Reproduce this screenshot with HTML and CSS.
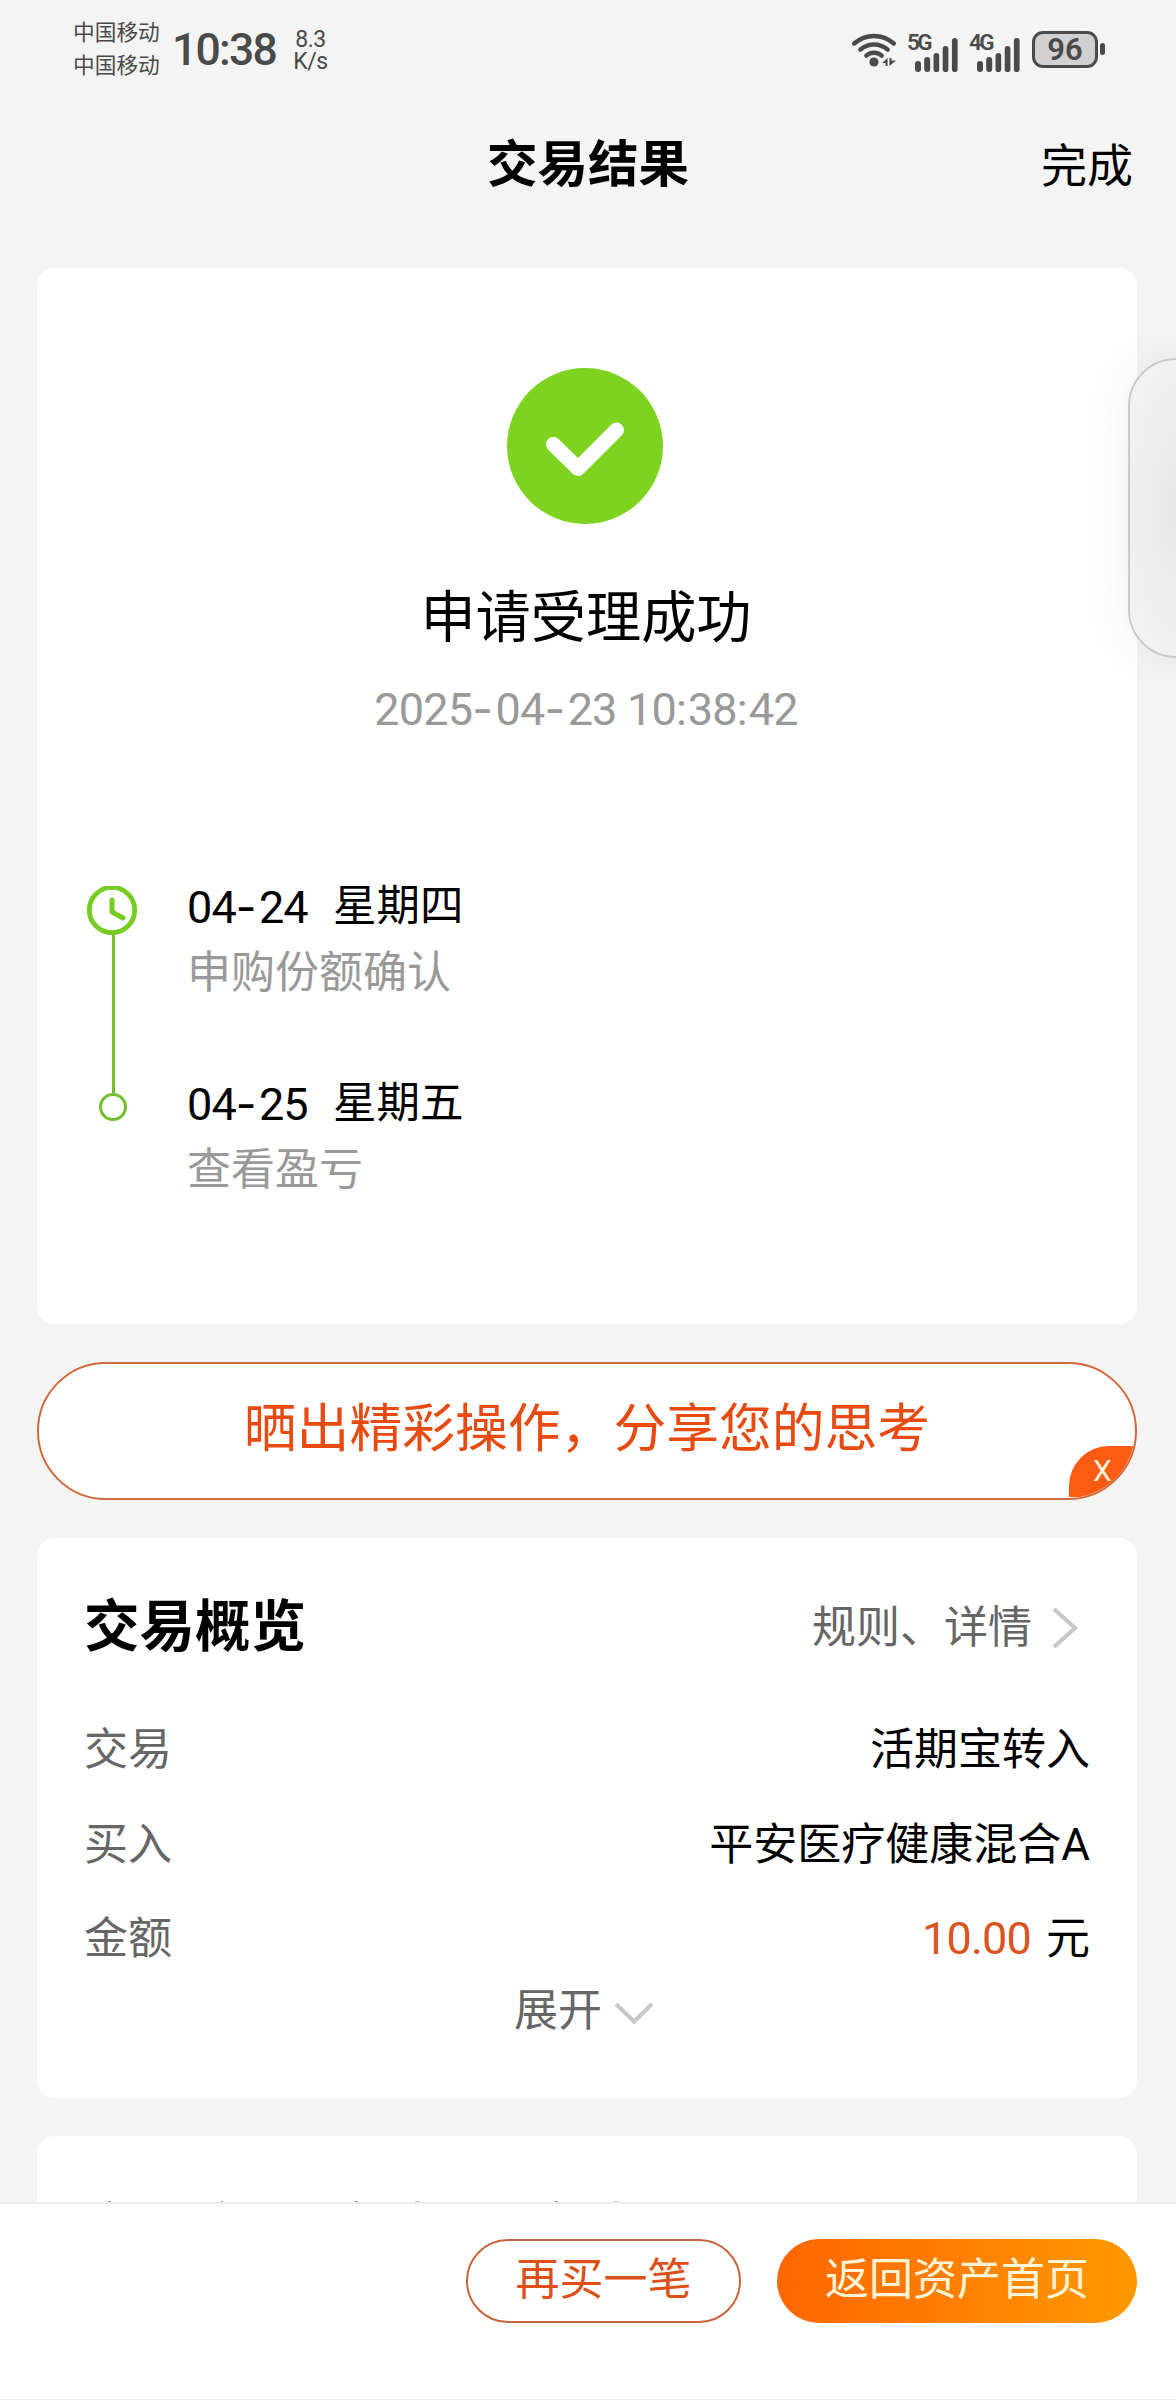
FILE: index.html
```html
<!DOCTYPE html>
<html lang="zh-CN">
<head>
    <meta charset="UTF-8">
    <meta name="viewport" content="width=device-width, initial-scale=1.0">
    <title>交易结果</title>
    <link rel="stylesheet" href="styles.css">
</head>
<body>
    <div class="page">
        <div class="status-bar">
            <div class="carrier">
                <span>中国移动</span>
                <span>中国移动</span>
            </div>
            <div class="time">10:38</div>
            <div class="speed">
                <span>8.3</span>
                <span>K/s</span>
            </div>
            <div class="status-icons">
                <svg class="wifi" width="48" height="36" viewBox="0 0 48 36" fill="none" stroke="#4a4a4a" stroke-width="4.4" stroke-linecap="round">
                    <path d="M4.2 11.5C15.5 1.4 32.5 1.4 43.8 11.5"/>
                    <path d="M10.3 17.6C18.3 10.7 29.7 10.7 37.7 17.6"/>
                    <path d="M16.3 23.6C20.8 19.8 27.2 19.8 31.7 23.6"/>
                    <circle cx="24" cy="30" r="4.6" fill="#4a4a4a" stroke="none"/>
                    <path d="M37.6 26v8h-2v-3h-3.6zM39.4 34v-8h2v2.500h4.6z" fill="#4a4a4a" stroke="none"/>
                </svg>
                <div class="signal">
                    <span class="net">5G</span>
                    <svg width="44" height="36" viewBox="0 0 44 36" fill="#4a4a4a">
                        <rect x="0" y="24" width="6" height="11" rx="3"/>
                        <rect x="9.200" y="20" width="6" height="15" rx="3"/>
                        <rect x="18.500" y="16" width="5.700" height="19" rx="2.800"/>
                        <rect x="27.700" y="9" width="5.700" height="26" rx="2.800"/>
                        <rect x="36.900" y="1" width="5.700" height="34" rx="2.800"/>
                    </svg>
                </div>
                <div class="signal">
                    <span class="net">4G</span>
                    <svg width="44" height="36" viewBox="0 0 44 36" fill="#4a4a4a">
                        <rect x="0" y="24" width="6" height="11" rx="3"/>
                        <rect x="9.200" y="20" width="6" height="15" rx="3"/>
                        <rect x="18.500" y="16" width="5.700" height="19" rx="2.800"/>
                        <rect x="27.700" y="9" width="5.700" height="26" rx="2.800"/>
                        <rect x="36.900" y="1" width="5.700" height="34" rx="2.800"/>
                    </svg>
                </div>
                <div class="battery">96</div>
                <div class="battery-cap"></div>
            </div>
        </div>

        <div class="header">
            <h1>交易结果</h1>
            <a class="done">完成</a>
        </div>

        <div class="content">
            <div class="card result">
                <svg class="check" width="156" height="156" viewBox="0 0 156 156">
                    <circle cx="78" cy="78" r="78" fill="#7ed321"/>
                    <path d="M46.500 76.500L71 100.500L109.500 62" fill="none" stroke="#fff" stroke-width="15" stroke-linecap="round" stroke-linejoin="round"/>
                </svg>
                <h2>申请受理成功</h2>
                <p class="result-time">2025<i>-</i>04<i>-</i>23 10<b>:</b>38<b>:</b>42</p>
                <div class="timeline">
                    <svg class="track" width="52" height="240" viewBox="0 0 52 240" fill="none">
                        <path d="M26.500 49V207" stroke="#72bf30" stroke-width="3"/>
                        <circle cx="25" cy="24" r="22.700" stroke="#77cc22" stroke-width="4.800"/>
                        <path d="M25 14V26L36 32" stroke="#77cc22" stroke-width="5" stroke-linecap="round" stroke-linejoin="round"/>
                        <circle cx="26" cy="221" r="12.500" stroke="#72bf30" stroke-width="3"/>
                    </svg>
                    <div class="steps">
                        <div class="step">
                            <p class="step-date"><span class="num">04<i>-</i>24</span>星期四</p>
                            <p class="step-desc">申购份额确认</p>
                        </div>
                        <div class="step">
                            <p class="step-date"><span class="num">04<i>-</i>25</span>星期五</p>
                            <p class="step-desc">查看盈亏</p>
                        </div>
                    </div>
                </div>
            </div>

            <div class="share">
                <span class="share-text">晒出精彩操作，分享您的思考</span>
                <span class="share-close">X</span>
            </div>

            <div class="card overview">
                <div class="overview-head">
                    <h3>交易概览</h3>
                    <div class="rule">规则、详情
                        <svg width="28" height="46" viewBox="0 0 28 46" fill="none" stroke="#c8c8c8" stroke-width="4.200">
                            <path d="M2 4L23 23L2 42"/>
                        </svg>
                    </div>
                </div>
                <div class="row"><span>交易</span><em>活期宝转入</em></div>
                <div class="row"><span>买入</span><em>平安医疗健康混合A</em></div>
                <div class="row"><span>金额</span><em><strong>10.00</strong>元</em></div>
                <div class="expand">展开
                    <svg width="40" height="24" viewBox="0 0 40 24" fill="none" stroke="#c8c8c8" stroke-width="4.200">
                        <path d="M2 2L20 19.500L38 2"/>
                    </svg>
                </div>
            </div>

            <div class="card more">
                <svg width="560" height="2" viewBox="0 0 560 2" fill="#999">
                    <path d="M23 0h3v2h-3zM136 0h2v2h-2zM270 0h3v2h-3zM470 0h3v2h-3z"/>
                    <path d="M330 0h5v2h-5zM528 0h5v2h-5z" fill="#ccc"/>
                </svg>
            </div>
        </div>

        <div class="footer">
            <a class="btn btn-again">再买一笔</a>
            <a class="btn btn-home">返回资产首页</a>
        </div>

        <!-- side handle -->
        <div class="side-handle"></div>
    </div>
</body>
</html>
```
FILE: styles.css
```css
* {
    box-sizing: border-box;
    margin: 0;
    padding: 0;
}
body {
    background-color: #f4f4f4;
    color: #000;
    font-family: Roboto, "Noto Sans CJK SC", sans-serif;
    font-size: 44px;
}
i, em {
    font-style: normal;
}
.page {
    position: relative;
    width: 1176px;
    height: 2400px;
    display: flex;
    flex-direction: column;
    overflow: hidden;
}

/* status bar */
.status-bar {
    display: flex;
    height: 100px;
    padding: 0 71px 0 73px;
    color: #4a4a4a;
}
.carrier {
    display: flex;
    flex-direction: column;
    padding-top: 16px;
    width: 99px;
    font-size: 21.7px;
    line-height: 33px;
}
.time {
    width: 121px;
    font-size: 44.5px;
    line-height: 101px;
    font-weight: 500;
    letter-spacing: -1.8px;
}
.speed {
    display: flex;
    flex-direction: column;
    align-items: center;
    padding-top: 29px;
    width: 35px;
    font-size: 23px;
    line-height: 22px;
    letter-spacing: -0.4px;
}
.status-icons {
    display: flex;
    margin-left: auto;
    padding-top: 31px;
}
.wifi {
    margin: 1px 10px 0 0;
}
.signal {
    position: relative;
    width: 52px;
    margin-right: 10px;
    padding: 1px 0 0 7px;
}
.net {
    position: absolute;
    left: -1px;
    top: 0;
    font-size: 22.5px;
    line-height: 22px;
    font-weight: 600;
    letter-spacing: -2.5px;
}
.battery {
    width: 66px;
    height: 37px;
    border: 3px solid #4a4a4a;
    border-radius: 11px;
    background-color: #d0d0d0;
    font-size: 31px;
    line-height: 32px;
    font-weight: 600;
    text-align: center;
}
.battery-cap {
    width: 5px;
    height: 12px;
    margin: 12px 0 0 2px;
    border-radius: 3px;
    background-color: #4a4a4a;
}

/* title */
.header {
    display: grid;
    grid-template-columns: 1fr auto 1fr;
    height: 168px;
    padding: 0 43px;
    line-height: 130px;
}
.header h1 {
    grid-column: 2;
    font-size: 50.5px;
    font-weight: 700;
}
.done {
    justify-self: end;
    font-size: 46px;
    line-height: 132px;
}

/* cards */
.content {
    flex: 1;
    min-height: 0;
    display: flex;
    flex-direction: column;
    gap: 38px;
    padding: 0 39px 0 37px;
    overflow: hidden;
}
.card {
    flex: none;
    background-color: #fff;
    border-radius: 18px;
}
.result {
    height: 1056px;
    padding: 100px 50px 0;
}
.check {
    display: block;
    margin: 0 0 0 420px;
}
.result h2 {
    margin-top: 53px;
    padding-right: 2px;
    font-size: 55.2px;
    font-weight: 400;
    line-height: 82px;
    text-align: center;
}
.result-time {
    margin-top: 21px;
    padding-right: 2px;
    color: #999;
    font-size: 45px;
    line-height: 58px;
    text-align: center;
    letter-spacing: -0.8px;
}
.result-time i, .num i {
    font-family: Inter, sans-serif;
    letter-spacing: 2.5px;
}
.result-time b {
    font-weight: 400;
    letter-spacing: 1px;
}
.timeline {
    display: flex;
    gap: 48px;
    margin-top: 147px;
}
.step {
    height: 197px;
}
.steps {
    margin-top: -12px;
}
.step-date, .step-desc {
    height: 66px;
    line-height: 66px;
}
.step-date {
    display: flex;
    font-size: 43.5px;
}
.num {
    width: 146px;
    font-size: 45px;
    letter-spacing: -0.9px;
}
.step-desc {
    color: #999;
}

/* share */
.share {
    position: relative;
    flex: none;
    height: 138px;
    border: 2px solid #d0693c;
    border-radius: 69px;
    background-color: #fff;
    overflow: hidden;
    text-align: center;
}
.share-text {
    color: #e84a10;
    font-size: 52.800px;
    line-height: 130px;
}
.share-close {
    position: absolute;
    right: -2px;
    bottom: 1px;
    width: 68px;
    height: 51px;
    padding-right: 2px;
    border-top-left-radius: 40px;
    background-color: #fb5b12;
    color: #fff3dc;
    font-size: 30px;
    line-height: 49px;
    text-indent: 1px;
}

/* overview */
.overview {
    height: 560px;
    padding: 49px 47px 0 47px;
}
.overview-head {
    display: flex;
    justify-content: space-between;
    height: 115px;
    line-height: 82px;
}
.overview h3 {
    font-size: 55.500px;
    font-weight: 700;
}
.rule {
    display: flex;
    color: #666;
}
.rule svg {
    margin: 18px 10px 0 20px;
}
.row {
    display: flex;
    justify-content: space-between;
    height: 94.500px;
    line-height: 96px;
    color: #666;
}
.row em {
    color: #000;
}
.row strong {
    margin-right: 15px;
    color: #d9541e;
    font-size: 45px;
    font-weight: 400;
    letter-spacing: -0.8px;
}
.expand {
    display: flex;
    justify-content: center;
    padding-right: 6px;
    color: #666;
    line-height: 50px;
}
.expand svg {
    margin: 16px 0 0 12px;
}
.more {
    height: 300px;
    padding: 65px 48px 0 62px;
}
.more svg {
    display: block;
    margin-left: -14px;
}

/* footer */
.footer {
    flex: none;
    display: flex;
    justify-content: flex-end;
    gap: 36px;
    height: 198px;
    padding: 35px 39px 0;
    border-top: 2px solid #ececec;
    border-bottom: 1px solid #f0f0f0;
    background-color: #fff;
}
.btn {
    height: 84px;
    border-radius: 42px;
    line-height: 82px;
    text-align: center;
}
.btn-again {
    width: 275px;
    border: 2px solid #c8643c;
    color: #dc4f18;
    line-height: 78px;
}
.btn-home {
    width: 360px;
    background: linear-gradient(90deg, #ff6600, #ff9900);
    color: #fff4d6;
}

.side-handle {
    position: absolute;
    top: 358px;
    right: -52px;
    width: 100px;
    height: 300px;
    border: 2px solid #cacaca;
    border-radius: 48px;
    background: radial-gradient(ellipse 54px 150px at center, #e6e6e6, #f1f1f1);
    box-shadow: 0 0 50px rgba(0, 0, 0, 0.07);
}
```
